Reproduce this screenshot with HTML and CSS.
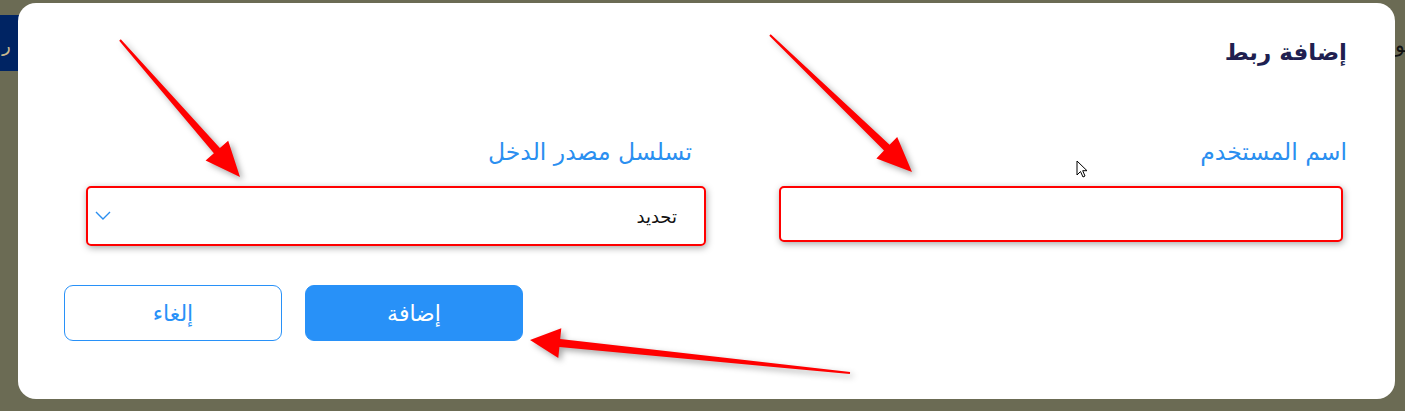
FILE: index.html
```html
<!doctype html>
<html lang="ar">
<head>
    <meta charset="UTF-8">
    <title>إضافة ربط</title>
    <link rel="stylesheet" href="styles.css">
</head>
<body>
    <div class="page-bar">
        <div class="page-tab">ر</div>
        <div class="page-title">تو</div>
    </div>

    <div class="modal" dir="rtl">
        <h2 class="modal-title">إضافة ربط</h2>

        <div class="fields">
            <div class="field field-user">
                <label class="field-label">اسم المستخدم</label>
                <input class="text-input" type="text">
            </div>
            <div class="field field-source">
                <label class="field-label">تسلسل مصدر الدخل</label>
                <div class="select-box">
                    <span class="select-value">تحديد</span>
                    <svg class="chevron" width="16" height="10" viewBox="0 0 16 10">
                        <path d="M1 1 L8 8 L15 1" fill="none" stroke="#2b8ff0" stroke-width="1.4"/>
                    </svg>
                </div>
            </div>
        </div>

        <div class="actions">
            <button class="btn btn-primary">إضافة</button>
            <button class="btn btn-outline">إلغاء</button>
        </div>
    </div>

    <!-- annotation arrows drawn over the dialog -->
    <svg class="marks" width="1405" height="411" viewBox="0 0 1405 411">
        <polygon points="119.2,40.7 213.9,153.3 205.6,160.6 240,177 228.2,140.8 219.9,148.1 120.8,39.3"/>
        <polygon points="769.3,35.7 884.0,150.6 876.4,158.5 912,172 897.2,136.9 889.6,144.8 770.7,34.3"/>
        <polygon points="850.1,372.0 560.2,339.1 561.3,328.2 530,340 558.3,358.0 559.4,347.1 849.9,374.0"/>
    </svg>

    <svg class="cursor" width="13" height="19" viewBox="0 0 13 19">
        <path d="M1 1 L1 15 L4.5 11.5 L7 17 L9 16 L6.7 10.7 L11 10.7 Z" fill="#fff" stroke="#000" stroke-width="1"/>
    </svg>
</body>
</html>
```

FILE: styles.css
```css
body {
    margin: 0;
    height: 411px;
    background-color: #6b6b54;
    font-family: "DejaVu Sans", sans-serif;
    overflow: hidden;
}

.page-bar {
    display: flex;
    justify-content: space-between;
    align-items: flex-start;
    padding-top: 15px;
}

.page-tab {
    width: 40px;
    height: 56px;
    background-color: #002463;
    color: #c9b98e;
    font-size: 18px;
    line-height: 62px;
    padding-left: 2px;
    box-sizing: border-box;
}

.page-title {
    width: 10px;
    overflow: hidden;
    color: #111;
    font-size: 20px;
    line-height: 60px;
    direction: ltr;
    white-space: nowrap;
}

.modal {
    position: absolute;
    top: 3px;
    left: 18px;
    width: 1377px;
    height: 396px;
    box-sizing: border-box;
    padding: 34px 48px 0 46px;
    background-color: #fff;
    border-radius: 18px;
}

.modal-title {
    margin: 0;
    font-size: 23px;
    line-height: 30px;
    font-weight: bold;
    color: #201f50;
}

.fields {
    display: flex;
    gap: 73px;
    margin-top: 70px;
}

.field {
    display: flex;
    flex-direction: column;
}

.field-user {
    width: 568px;
}

.field-source {
    width: 620px;
}

.field-label {
    font-size: 23.5px;
    line-height: 30px;
    color: #2b8ff0;
    margin-bottom: 19px;
}

.field-source .field-label {
    padding-right: 14px;
}

.text-input {
    box-sizing: border-box;
    width: 564px;
    height: 56px;
    margin-right: 4px;
    border: 2px solid #ff0000;
    border-radius: 5px;
    box-shadow: 1px 2px 7px rgba(0, 0, 0, 0.35);
    outline: none;
    background: #fff;
}

.select-box {
    box-sizing: border-box;
    height: 60px;
    display: flex;
    align-items: center;
    justify-content: space-between;
    padding: 0 27px 0 7px;
    border: 2px solid #ff0000;
    border-radius: 5px;
    box-shadow: 1px 2px 7px rgba(0, 0, 0, 0.35);
}

.select-value {
    font-size: 18px;
    color: #111;
}

.chevron {
    display: block;
}

.actions {
    display: flex;
    justify-content: flex-end;
    gap: 23px;
    margin-top: 39px;
}

.btn {
    width: 218px;
    height: 56px;
    border-radius: 9px;
    font-family: "DejaVu Sans", sans-serif;
    font-size: 22px;
    cursor: pointer;
}

.btn-primary {
    background-color: #2891f8;
    border: 1px solid #2891f8;
    color: #fff;
}

.btn-outline {
    background-color: #fff;
    border: 1px solid #2891f8;
    color: #2891f8;
}

.marks {
    position: absolute;
    top: 0;
    left: 0;
    fill: #ff0000;
    filter: drop-shadow(3px 3px 3px rgba(0, 0, 0, 0.35));
    pointer-events: none;
}

.cursor {
    position: absolute;
    top: 160px;
    left: 1076px;
}
```
